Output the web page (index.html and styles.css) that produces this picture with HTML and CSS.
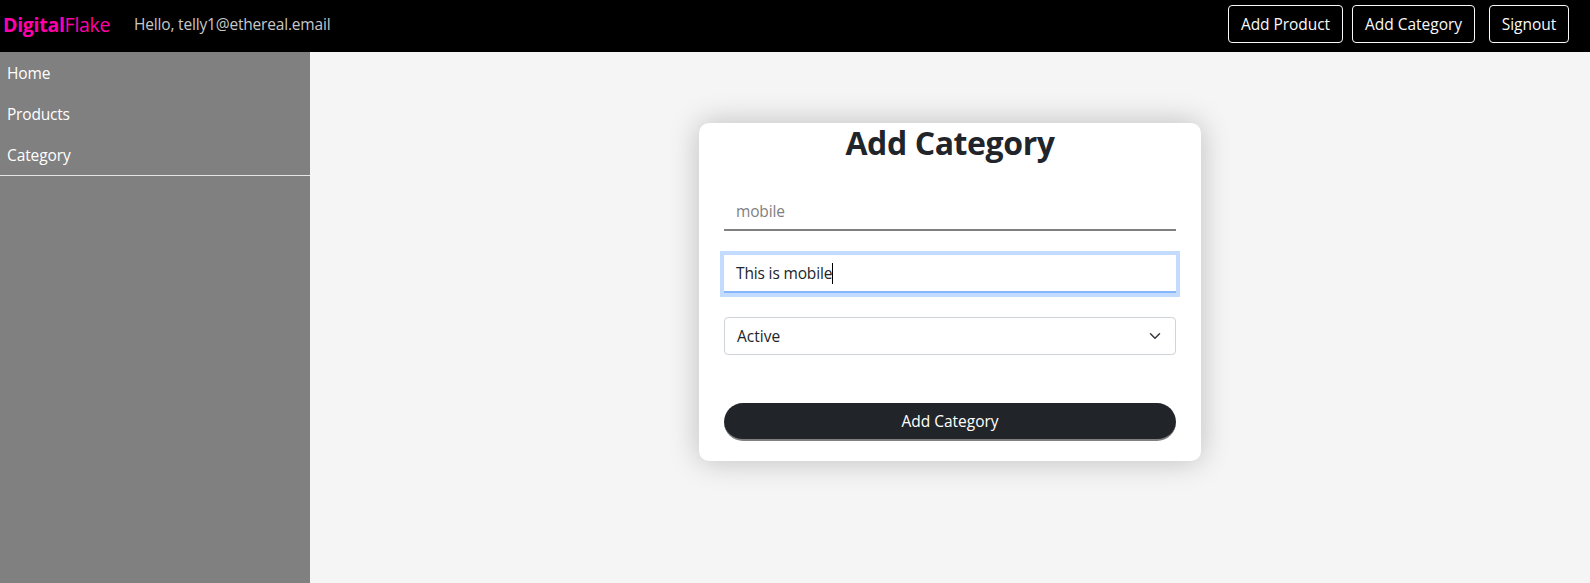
FILE: index.html
```html
<!DOCTYPE html>
<html lang="en">
<head>
<meta charset="utf-8">
<title>DigitalFlake</title>
<link rel="stylesheet" href="styles.css">
</head>
<body>
<header class="navbar">
  <a class="brand"><b>Digital</b><span>Flake</span></a>
  <span class="greeting">Hello, telly1@ethereal.email</span>
  <nav class="actions">
    <button class="btn-outline add-product">Add Product</button>
    <button class="btn-outline add-category">Add Category</button>
    <button class="btn-outline signout">Signout</button>
  </nav>
</header>
<div class="layout">
  <aside class="sidebar">
    <nav class="side-links">
      <a>Home</a>
      <a class="products">Products</a>
      <a>Category</a>
    </nav>
  </aside>
  <main class="content">
    <form class="card">
      <h1>Add Category</h1>
      <div class="field name">mobile</div>
      <div class="field description focused"><span>This is mobile</span><i class="caret"></i></div>
      <div class="select"><span>Active</span>
        <svg width="16" height="12" viewBox="0 0 16 16" preserveAspectRatio="xMidYMid meet"><path fill="none" stroke="#343a40" stroke-linecap="round" stroke-linejoin="round" stroke-width="2" d="m2 5 6 6 6-6"/></svg>
      </div>
      <button class="submit" type="button">Add Category</button>
    </form>
  </main>
</div>
</body>
</html>
```
FILE: styles.css
```css
* { box-sizing: border-box; }
body {
  margin: 0;
  height: 583px;
  overflow: hidden;
  display: flex;
  flex-direction: column;
  background: #f5f5f5;
  color: #212529;
  font: 400 15.5px/24px "Open Sans", "Noto Sans", sans-serif;
}
button { font: inherit; cursor: pointer; }
.navbar {
  height: 52px;
  flex: none;
  display: flex;
  align-items: flex-start;
  padding: 5px 21px 0 3px;
  background: #000;
}
.brand {
  width: 131px;
  color: #ff00a8;
  font-size: 19.5px;
  letter-spacing: -.28px;
  line-height: 40px;
  white-space: nowrap;
}
.greeting { color: #c8c8c8; line-height: 38px; letter-spacing: -.18px; white-space: nowrap; }
.actions { display: flex; margin-left: auto; }
.btn-outline {
  height: 38px;
  padding: 0;
  border: 1px solid #f8f9fa;
  border-radius: 4px;
  background: none;
  color: #f8f9fa;
  white-space: nowrap;
}
.add-product { width: 115px; margin-right: 9px; letter-spacing: -.05px; }
.add-category { width: 123px; margin-right: 14px; }
.signout { width: 80px; }
.layout { flex: 1; display: flex; }
.sidebar { width: 310px; padding-top: 1px; background: #808080; }
.side-links { display: flex; flex-direction: column; border-bottom: 1px solid #e6e6e6; }
.side-links a { height: 41px; padding-left: 7px; line-height: 41px; letter-spacing: -.1px; color: #fff; }
.side-links .products { letter-spacing: -.2px; }
.side-links a:last-child { height: 40px; }
.content { flex: 1; display: flex; justify-content: center; align-items: flex-start; padding-top: 71px; }
.card {
  width: 502px;
  height: 338px;
  padding: 0 25px;
  border-radius: 10px;
  background: #fff;
  box-shadow: 0 0 30px rgba(0, 0, 0, .23);
}
h1 { margin: 0 0 30px; font-size: 32px; line-height: 40px; font-weight: 700; letter-spacing: -.4px; text-align: center; white-space: nowrap; }
.field {
  height: 38px;
  padding: 0 12px;
  display: flex;
  align-items: center;
  border-bottom: 2px solid #808080;
}
.name { color: #808080; margin-bottom: 24px; letter-spacing: -.15px; }
.focused { letter-spacing: -.15px; border-bottom-color: #86b7fe; box-shadow: 0 0 0 4px #c2dbfe; }
.caret { width: 1px; height: 21px; background: #000; }
.select {
  height: 38px;
  margin: 24px 0 48px;
  padding: 0 12px;
  display: flex;
  align-items: center;
  justify-content: space-between;
  border: 1px solid #ced4da;
  border-radius: 4px;
}
.submit {
  display: block;
  width: 100%;
  height: 38px;
  padding: 0;
  border: 0;
  border-bottom: 2px solid #808080;
  border-radius: 20px;
  background: #212529;
  color: #fff;
}
```
